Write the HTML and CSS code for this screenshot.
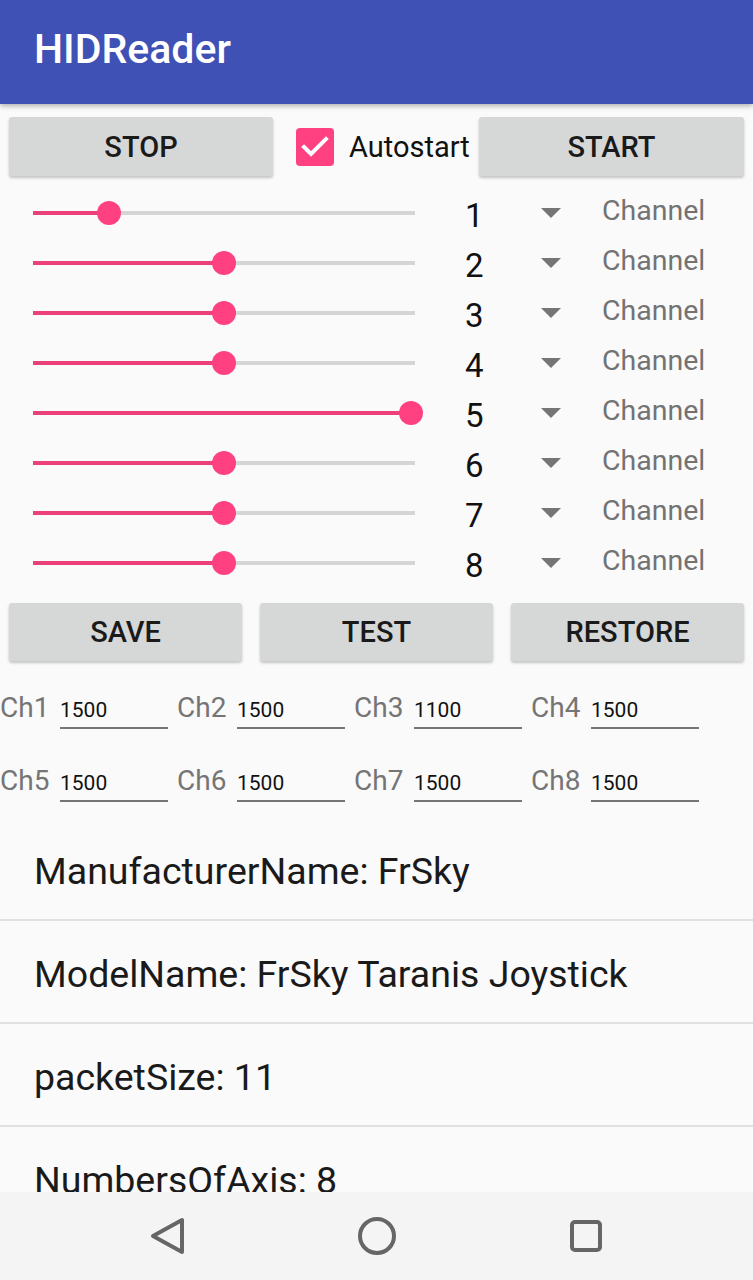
FILE: index.html
```html
<!DOCTYPE html>
<html>
<head>
<meta charset="utf-8">
<link rel="stylesheet" href="styles.css">
</head>
<body>
<header class="appbar"><h1 class="title">HIDReader</h1></header>
<main class="content">
  <div class="toprow">
    <button class="btn btn-wide">STOP</button>
    <label class="check">
      <span class="box"><svg viewBox="0 0 38 38" width="38" height="38"><path d="M8 19 L15 26 L30 11" fill="none" stroke="#fff" stroke-width="4" stroke-linecap="square"/></svg></span>
      <span class="check-label">Autostart</span>
    </label>
    <button class="btn btn-wide btn-right">START</button>
  </div>

  <div class="sliders">
    <div class="srow"><div class="slider"><div class="fill" style="width:20%"></div><div class="thumb" style="left:20%"></div></div><span class="num">1</span><span class="tri"></span><span class="chan">Channel</span></div>
    <div class="srow"><div class="slider"><div class="fill" style="width:50%"></div><div class="thumb" style="left:50%"></div></div><span class="num">2</span><span class="tri"></span><span class="chan">Channel</span></div>
    <div class="srow"><div class="slider"><div class="fill" style="width:50%"></div><div class="thumb" style="left:50%"></div></div><span class="num">3</span><span class="tri"></span><span class="chan">Channel</span></div>
    <div class="srow"><div class="slider"><div class="fill" style="width:50%"></div><div class="thumb" style="left:50%"></div></div><span class="num">4</span><span class="tri"></span><span class="chan">Channel</span></div>
    <div class="srow"><div class="slider"><div class="fill" style="width:99%"></div><div class="thumb" style="left:99%"></div></div><span class="num">5</span><span class="tri"></span><span class="chan">Channel</span></div>
    <div class="srow"><div class="slider"><div class="fill" style="width:50%"></div><div class="thumb" style="left:50%"></div></div><span class="num">6</span><span class="tri"></span><span class="chan">Channel</span></div>
    <div class="srow"><div class="slider"><div class="fill" style="width:50%"></div><div class="thumb" style="left:50%"></div></div><span class="num">7</span><span class="tri"></span><span class="chan">Channel</span></div>
    <div class="srow"><div class="slider"><div class="fill" style="width:50%"></div><div class="thumb" style="left:50%"></div></div><span class="num">8</span><span class="tri"></span><span class="chan">Channel</span></div>
  </div>

  <div class="btnrow">
    <button class="btn">SAVE</button>
    <button class="btn">TEST</button>
    <button class="btn">RESTORE</button>
  </div>

  <div class="chgrid">
    <div class="field"><span class="chl">Ch1</span><span class="val">1500</span></div>
    <div class="field"><span class="chl">Ch2</span><span class="val">1500</span></div>
    <div class="field"><span class="chl">Ch3</span><span class="val">1100</span></div>
    <div class="field"><span class="chl">Ch4</span><span class="val">1500</span></div>
    <div class="field"><span class="chl">Ch5</span><span class="val">1500</span></div>
    <div class="field"><span class="chl">Ch6</span><span class="val">1500</span></div>
    <div class="field"><span class="chl">Ch7</span><span class="val">1500</span></div>
    <div class="field"><span class="chl">Ch8</span><span class="val">1500</span></div>
  </div>

  <ul class="list">
    <li>ManufacturerName: FrSky</li>
    <li>ModelName: FrSky Taranis Joystick</li>
    <li>packetSize: 11</li>
    <li>NumbersOfAxis: 8</li>
  </ul>
</main>

<nav class="navbar">
  <svg class="navicons" width="753" height="88" viewBox="0 0 753 88">
    <path d="M153 44 L182 28 L182 60 Z" fill="none" stroke="#666" stroke-width="4" stroke-linejoin="round"/>
    <circle cx="377" cy="44" r="17" fill="none" stroke="#666" stroke-width="4"/>
    <rect x="572" y="30" width="28" height="28" rx="3" fill="none" stroke="#666" stroke-width="4"/>
  </svg>
</nav>
</body>
</html>
```

FILE: styles.css
```css
* { box-sizing: border-box; }
html, body { margin: 0; padding: 0; }
body {
  width: 753px;
  height: 1280px;
  overflow: hidden;
  background: #fafafa;
  font-family: Roboto, "Noto Sans", sans-serif;
  color: #212121;
}
.appbar {
  height: 104px;
  background: #3f51b5;
  display: flex;
  align-items: center;
  padding-left: 34px;
  box-shadow: 0 2px 5px rgba(0,0,0,0.3);
  position: relative;
  z-index: 2;
}
.title {
  margin: 0 0 6px 0;
  color: #fff;
  font-weight: 500;
  font-size: 41px;
}
.content { display: flex; flex-direction: column; }

.btn {
  height: 59px;
  border: none;
  border-radius: 3px;
  background: #d6d7d7;
  box-shadow: 0 2px 3px rgba(0,0,0,0.22);
  font-family: Roboto, sans-serif;
  font-weight: 500;
  font-size: 29px;
  color: #1a1a1a;
  padding: 0;
}
.toprow {
  display: flex;
  align-items: center;
  padding: 13px 9px 12px 9px;
}
.btn-wide { width: 264px; }
.btn-right { margin-left: auto; width: 265px; }
.check { display: flex; align-items: center; margin-left: 23px; }
.box {
  width: 38px; height: 38px;
  border-radius: 4px;
  background: #ff4081;
  display: block;
}
.box svg { display: block; }
.check-label {
  margin-left: 15px;
  font-size: 29px;
  color: #111;
}

.sliders { display: flex; flex-direction: column; }
.srow {
  height: 50px;
  display: flex;
  align-items: center;
}
.slider {
  position: relative;
  margin-left: 33px;
  width: 382px;
  height: 4px;
  background: #d5d5d5;
  margin-right: 50px;
}
.fill { height: 4px; background: #ec407a; }
.thumb {
  position: absolute;
  top: 50%;
  width: 24px; height: 24px;
  margin: -12px 0 0 -12px;
  border-radius: 50%;
  background: #ff4081;
}
.num {
  width: 76px;
  font-size: 33px;
  color: #111;
  margin-top: 5px;
}
.tri {
  width: 0; height: 0;
  border-left: 10px solid transparent;
  border-right: 10px solid transparent;
  border-top: 10px solid #757575;
  margin-right: 41px;
}
.chan {
  font-size: 28.5px;
  color: #737373;
  margin-bottom: 6px;
}

.btnrow {
  display: flex;
  gap: 18px;
  padding: 15px 9px 0 9px;
}
.btnrow .btn { width: 233px; height: 58px; }

.chgrid {
  display: grid;
  grid-template-columns: repeat(4, 177px);
  row-gap: 36px;
  margin-top: 31px;
  margin-bottom: 16px;
}
.field { display: flex; align-items: baseline; }
.chl {
  font-size: 28px;
  line-height: 32px;
  color: #757575;
  width: 60px;
}
.val {
  width: 108px;
  font-size: 21px;
  line-height: 24px;
  color: #111;
  padding-bottom: 5px;
  border-bottom: 2px solid #757575;
}

.list { list-style: none; margin: 0; padding: 0; }
.list li {
  height: 103px;
  border-bottom: 2px solid #e0e0e0;
  display: flex;
  align-items: center;
  padding: 4px 0 0 34px;
  font-size: 37.5px;
  color: #1a1a1a;
}

.navbar {
  position: fixed;
  left: 0; bottom: 0;
  width: 753px;
  height: 88px;
  background: #f4f4f4;
  z-index: 3;
}
.navicons { display: block; }
```
